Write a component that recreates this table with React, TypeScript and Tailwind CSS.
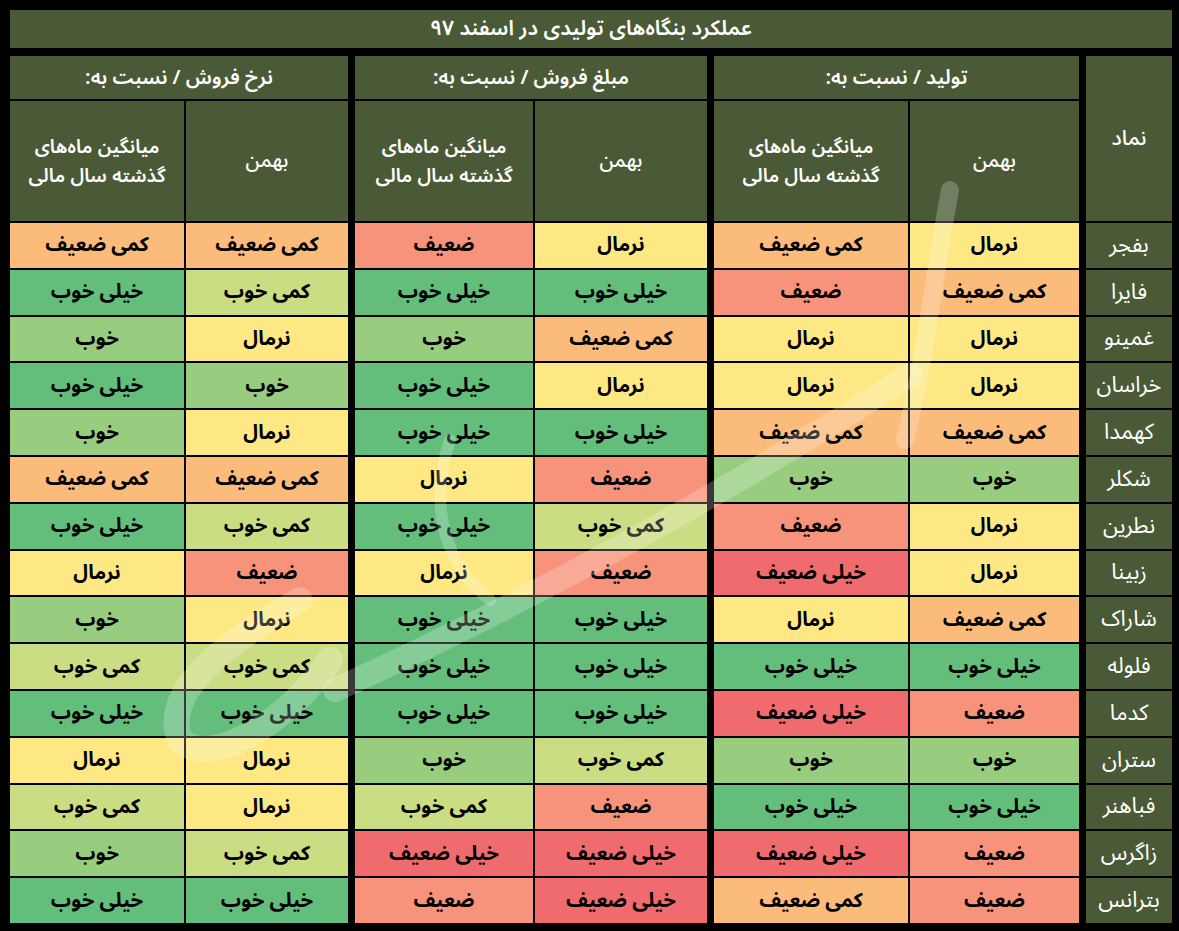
import React from "react";

type Level =
  | "خیلی ضعیف"
  | "ضعیف"
  | "کمی ضعیف"
  | "نرمال"
  | "کمی خوب"
  | "خوب"
  | "خیلی خوب";

const levelBg: Record<Level, string> = {
  "خیلی ضعیف": "bg-[#f06b6e]",
  "ضعیف": "bg-[#f6937a]",
  "کمی ضعیف": "bg-[#fbbc7b]",
  "نرمال": "bg-[#fde883]",
  "کمی خوب": "bg-[#cbdd83]",
  "خوب": "bg-[#98cd7f]",
  "خیلی خوب": "bg-[#63be7b]",
};

// [نماد, تولید بهمن, تولید میانگین, مبلغ بهمن, مبلغ میانگین, نرخ بهمن, نرخ میانگین]
const rows: [string, Level, Level, Level, Level, Level, Level][] = [
  ["بفجر", "نرمال", "کمی ضعیف", "نرمال", "ضعیف", "کمی ضعیف", "کمی ضعیف"],
  ["فایرا", "کمی ضعیف", "ضعیف", "خیلی خوب", "خیلی خوب", "کمی خوب", "خیلی خوب"],
  ["غمینو", "نرمال", "نرمال", "کمی ضعیف", "خوب", "نرمال", "خوب"],
  ["خراسان", "نرمال", "نرمال", "نرمال", "خیلی خوب", "خوب", "خیلی خوب"],
  ["کهمدا", "کمی ضعیف", "کمی ضعیف", "خیلی خوب", "خیلی خوب", "نرمال", "خوب"],
  ["شکلر", "خوب", "خوب", "ضعیف", "نرمال", "کمی ضعیف", "کمی ضعیف"],
  ["نطرین", "نرمال", "ضعیف", "کمی خوب", "خیلی خوب", "کمی خوب", "خیلی خوب"],
  ["زبینا", "نرمال", "خیلی ضعیف", "ضعیف", "نرمال", "ضعیف", "نرمال"],
  ["شاراک", "کمی ضعیف", "نرمال", "خیلی خوب", "خیلی خوب", "نرمال", "خوب"],
  ["فلوله", "خیلی خوب", "خیلی خوب", "خیلی خوب", "خیلی خوب", "کمی خوب", "کمی خوب"],
  ["کدما", "ضعیف", "خیلی ضعیف", "خیلی خوب", "خیلی خوب", "خیلی خوب", "خیلی خوب"],
  ["ستران", "خوب", "خوب", "کمی خوب", "خوب", "نرمال", "نرمال"],
  ["فباهنر", "خیلی خوب", "خیلی خوب", "ضعیف", "کمی خوب", "نرمال", "کمی خوب"],
  ["زاگرس", "ضعیف", "خیلی ضعیف", "خیلی ضعیف", "خیلی ضعیف", "کمی خوب", "خوب"],
  ["بترانس", "ضعیف", "کمی ضعیف", "خیلی ضعیف", "ضعیف", "خیلی خوب", "خیلی خوب"],
];

// column widths, right to left
const groups = [
  { title: "تولید / نسبت به:", w: [169, 194] },
  { title: "مبلغ فروش / نسبت به:", w: [172, 178] },
  { title: "نرخ فروش / نسبت به:", w: [162, 174] },
];

const head = "bg-[#4b5a36] text-white flex items-center justify-center text-center";

function Cell({ level, w }: { level: Level; w: number }) {
  return (
    <div
      className={`${levelBg[level]} h-[44.8px] flex items-center justify-center text-[20px] font-bold text-black`}
      style={{ width: w }}
    >
      {level}
    </div>
  );
}

export default function App() {
  return (
    <div
      dir="rtl"
      className="relative w-[1179px] h-[931px] bg-black pt-[10px] pl-[10px] pr-[7px] overflow-hidden font-['Noto_Sans_Arabic','DejaVu_Sans',sans-serif]"
    >
      {/* TITLE */}
      <div className={`${head} h-[38px] mb-[8px] text-[21px] font-semibold`}>
        عملکرد بنگاه‌های تولیدی در اسفند ۹۷
      </div>

      {/* HEADER */}
      <div className="flex gap-[7px]">
        <div className={`${head} w-[86px] h-[165px] text-[21px] font-medium`}>نماد</div>
        {groups.map((g) => (
          <div key={g.title} className="flex flex-col gap-[2px]">
            <div className={`${head} h-[43px] text-[20px] font-semibold`}>{g.title}</div>
            <div className="flex gap-[2px]">
              <div className={`${head} h-[120px] text-[20px] font-medium`} style={{ width: g.w[0] }}>
                بهمن
              </div>
              <div
                className={`${head} flex-col h-[120px] text-[19px] font-semibold leading-[29px] font-['Liberation_Sans','Noto_Sans_Arabic',sans-serif]`}
                style={{ width: g.w[1] }}
              >
                <div>میانگین ماه‌های</div>
                <div>گذشته سال مالی</div>
              </div>
            </div>
          </div>
        ))}
      </div>

      {/* BODY */}
      <div className="flex flex-col gap-[2px] mt-[2px]">
        {rows.map((r) => (
          <div key={r[0]} className="flex gap-[7px]">
            <div className={`${head} w-[86px] h-[44.8px] text-[22px]`}>{r[0]}</div>
            {groups.map((g, gi) => (
              <div key={g.title} className="flex gap-[2px]">
                <Cell level={r[1 + gi * 2]} w={g.w[0]} />
                <Cell level={r[2 + gi * 2]} w={g.w[1]} />
              </div>
            ))}
          </div>
        ))}
      </div>

      {/* WATERMARK */}
      <svg
        className="absolute left-0 top-0 pointer-events-none"
        width="1179"
        height="931"
        viewBox="0 0 1179 931"
        fill="none"
      >
        <g stroke="white" strokeOpacity="0.22" strokeLinecap="round" fill="none">
          <path d="M300 600 C 230 640, 160 690, 180 740 C 210 770, 290 720, 330 660" strokeWidth="26" />
          <path d="M335 690 Q 620 560 910 375" strokeWidth="24" />
          <path d="M950 190 C 935 270, 925 360, 905 440" strokeWidth="18" />
          <path d="M450 440 C 430 500, 440 560, 490 600" strokeWidth="12" />
        </g>
      </svg>
    </div>
  );
}
